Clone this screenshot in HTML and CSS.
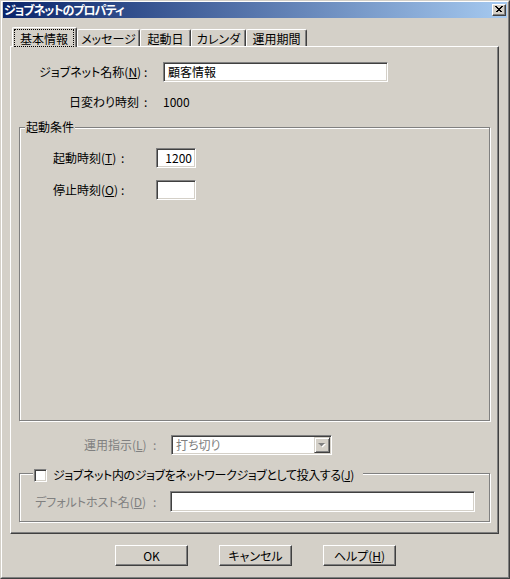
FILE: index.html
```html
<!DOCTYPE html>
<html lang="ja">
<head>
<meta charset="utf-8">
<title>ジョブネットのプロパティ</title>
<link rel="stylesheet" href="styles.css">
</head>
<body>
<div class="window">
  <div class="frame">
    <div class="titlebar">
      <span class="title">ジョブネットのプロパティ</span>
      <span class="close-btn">
        <svg width="8" height="7" viewBox="0 0 8 7"><path d="M0.5 0.5 L6.5 6.5 M1.5 0.5 L7.5 6.5 M6.5 0.5 L0.5 6.5 M7.5 0.5 L1.5 6.5" stroke="#000" stroke-width="1" fill="none" shape-rendering="crispEdges"/></svg>
      </span>
    </div>
    <div class="client">
      <div class="tabs">
        <div class="tab tab-active"><span class="focus">基本情報</span></div>
        <div class="tab tab-msg">メッセージ</div>
        <div class="tab tab-start">起動日</div>
        <div class="tab tab-cal">カレンダ</div>
        <div class="tab tab-period">運用期間</div>
      </div>
      <div class="panel">
        <div class="row row-name">
          <span class="lbl">ジョブネット名称(<u>N</u>)</span>
          <span class="colon">:</span>
          <div class="edit">顧客情報</div>
        </div>
        <div class="row row-day">
          <span class="lbl">日変わり時刻</span>
          <span class="colon">:</span>
          <span class="value">1000</span>
        </div>
        <div class="group group-start">
          <span class="group-title">起動条件</span>
          <div class="row row-time row-time-first">
            <span class="lbl">起動時刻(<u>T</u>)</span>
            <span class="colon">:</span>
            <div class="edit edit-right">1200</div>
          </div>
          <div class="row row-time">
            <span class="lbl">停止時刻(<u>O</u>)</span>
            <span class="colon">:</span>
            <div class="edit edit-right"></div>
          </div>
        </div>
        <div class="row row-op disabled">
          <span class="lbl">運用指示(<u>L</u>)</span>
          <span class="colon">:</span>
          <div class="edit combo">
            <span class="combo-text">打ち切り</span>
            <span class="drop-btn">
              <svg width="8" height="5" viewBox="0 0 8 5"><polygon points="1,1 8,1 4.5,4.5" fill="#fff"/><polygon points="0,0 7,0 3.5,3.5" fill="#808080"/></svg>
            </span>
          </div>
        </div>
        <div class="group group-net">
          <span class="group-title check-title">
            <span class="checkbox"></span>
            <span class="check-label">ジョブネット内のジョブをネットワークジョブとして投入する(<u>J</u>)</span>
          </span>
          <div class="row row-host disabled">
            <span class="lbl">デフォルトホスト名(<u>D</u>)</span>
            <span class="colon">:</span>
            <div class="edit"></div>
          </div>
        </div>
      </div>
      <div class="buttons">
        <button class="btn">OK</button>
        <button class="btn">キャンセル</button>
        <button class="btn">ヘルプ(<u>H</u>)</button>
      </div>
    </div>
  </div>
</div>
</body>
</html>
```
FILE: styles.css
```css
html, body {
  margin: 0;
  padding: 0;
}
body {
  background: #d4d0c8;
  font-family: "Noto Sans CJK JP", "Noto Sans", sans-serif;
  font-size: 12px;
  line-height: 14px;
  font-feature-settings: "palt" 1;
  color: #000;
}
u {
  text-decoration: underline;
  text-underline-offset: 1px;
}
.window {
  width: 510px;
  height: 579px;
  box-sizing: border-box;
  border: 1px solid;
  border-color: #d4d0c8 #404040 #404040 #d4d0c8;
}
.frame {
  height: 100%;
  box-sizing: border-box;
  border: 1px solid;
  border-color: #fff #808080 #808080 #fff;
  padding: 0 1px 1px 1px;
  display: flex;
  flex-direction: column;
}
.titlebar {
  height: 16px;
  flex: none;
  background: linear-gradient(to right, #0a246a, #a6caf0);
  display: flex;
  align-items: center;
  justify-content: space-between;
  padding: 0 1px 0 1px;
}
.title {
  color: #fff;
  font-weight: bold;
  line-height: 14px;
  letter-spacing: -1px;
}
.close-btn {
  width: 14px;
  height: 12px;
  box-sizing: border-box;
  background: #d4d0c8;
  border: 1px solid;
  border-color: #fff #404040 #404040 #fff;
  box-shadow: inset -1px -1px #808080;
  display: flex;
  align-items: center;
  justify-content: center;
  padding: 0 1px 1px 0;
}
.close-btn svg {
  display: block;
}
.client {
  flex: 1;
  padding: 9px 0 0 7px;
}
.tabs {
  display: flex;
  align-items: flex-end;
  height: 19px;
  padding-left: 2px;
  position: relative;
  z-index: 1;
}
.tab {
  box-sizing: border-box;
  height: 17px;
  border-left: 1px solid #fff;
  border-top: 1px solid #fff;
  border-right: 1px solid #404040;
  box-shadow: inset -1px 0 #808080;
  border-top-left-radius: 2px;
  border-top-right-radius: 2px;
  background: #d4d0c8;
  display: flex;
  justify-content: center;
  align-items: center;
  padding-top: 1px;
  white-space: nowrap;
}
.tab-active {
  width: 65px;
  height: 20px;
  margin-bottom: -1px;
  padding: 1px 2px 0 1px;
  align-items: stretch;
}
.focus {
  flex: 1;
  border: 1px dotted #000;
  display: flex;
  align-items: center;
  justify-content: center;
  padding-top: 1px;
}
.tab-msg { width: 63px; }
.tab-start { width: 51px; }
.tab-cal { width: 55px; }
.tab-period { width: 61px; }

.panel {
  width: 489px;
  height: 488px;
  box-sizing: border-box;
  border: 1px solid;
  border-color: #fff #404040 #404040 #fff;
  box-shadow: inset -1px -1px #808080;
  display: flex;
  flex-direction: column;
  align-items: flex-start;
}
.row {
  display: grid;
  align-items: center;
  white-space: nowrap;
}
.colon {
  margin-left: -2px;
}
.edit {
  box-sizing: border-box;
  height: 20px;
  background: #fff;
  border: 1px solid;
  border-color: #808080 #fff #fff #808080;
  box-shadow: inset 1px 1px #404040, inset -1px -1px #d4d0c8;
  display: flex;
  align-items: center;
  padding: 0 2px 0 4px;
}
.edit-right {
  justify-content: flex-end;
  padding-right: 3px;
}
.row-name {
  margin-top: 15px;
  grid-template-columns: 135px 17px 225px;
}
.row-name .lbl { padding-left: 28px; }
.row-day {
  margin-top: 13px;
  grid-template-columns: 135px 17px auto;
  height: 14px;
}
.row-day .lbl { padding-left: 58px; }

.group {
  position: relative;
  margin-left: 8px;
  width: 471px;
  box-sizing: border-box;
  border: 1px solid #808080;
  box-shadow: inset 1px 1px #fff, 1px 1px #fff;
  display: flex;
  flex-direction: column;
  align-items: flex-start;
}
.group-start {
  margin-top: 18px;
  height: 294px;
}
.group-title {
  position: absolute;
  top: -8px;
  left: 5px;
  padding: 0 1px;
  background: #d4d0c8;
  line-height: 14px;
}
.row-time {
  grid-template-columns: 103px 33px 40px;
  margin-top: 12px;
}
.row-time-first {
  margin-top: 20px;
}
.row-time .lbl { padding-left: 33px; }

.disabled {
  color: #808080;
}
.row-op {
  margin-top: 14px;
  grid-template-columns: 144px 16px 161px;
}
.row-op .lbl { padding-left: 73px; }
.combo {
  padding: 0 0 0 4px;
  justify-content: space-between;
  align-items: stretch;
}
.combo-text {
  display: flex;
  align-items: center;
}
.drop-btn {
  width: 16px;
  margin: 1px 1px 1px 0;
  box-sizing: border-box;
  background: #d4d0c8;
  border: 1px solid;
  border-color: #d4d0c8 #404040 #404040 #d4d0c8;
  box-shadow: inset 1px 1px #fff, inset -1px -1px #808080;
  display: flex;
  align-items: center;
  justify-content: center;
}
.drop-btn svg { display: block; }

.group-net {
  margin-top: 18px;
  height: 49px;
}
.check-title {
  top: -6px;
  left: 13px;
  padding: 0 9px 0 1px;
  display: flex;
  align-items: flex-start;
  height: 14px;
  white-space: nowrap;
}
.check-label {
  letter-spacing: -0.4px;
}
.checkbox {
  width: 13px;
  height: 13px;
  box-sizing: border-box;
  margin-top: 1px;
  margin-right: 6px;
  background: #fff;
  border: 1px solid;
  border-color: #808080 #fff #fff #808080;
  box-shadow: inset 1px 1px #404040, inset -1px -1px #d4d0c8;
}
.row-host {
  margin-top: 17px;
  grid-template-columns: 135px 15px 305px;
}
.row-host .lbl { padding-left: 15px; }
.row-host .edit { height: 21px; }

.buttons {
  display: flex;
  gap: 31px;
  margin-top: 11px;
  padding-left: 105px;
}
.btn {
  width: 73px;
  height: 21px;
  box-sizing: border-box;
  margin: 0;
  padding: 1px 0 0 0;
  font: inherit;
  color: #000;
  background: #d4d0c8;
  border: 1px solid;
  border-color: #fff #404040 #404040 #fff;
  box-shadow: inset -1px -1px #808080, inset 1px 1px #d4d0c8;
  border-radius: 0;
  line-height: 14px;
}
```
